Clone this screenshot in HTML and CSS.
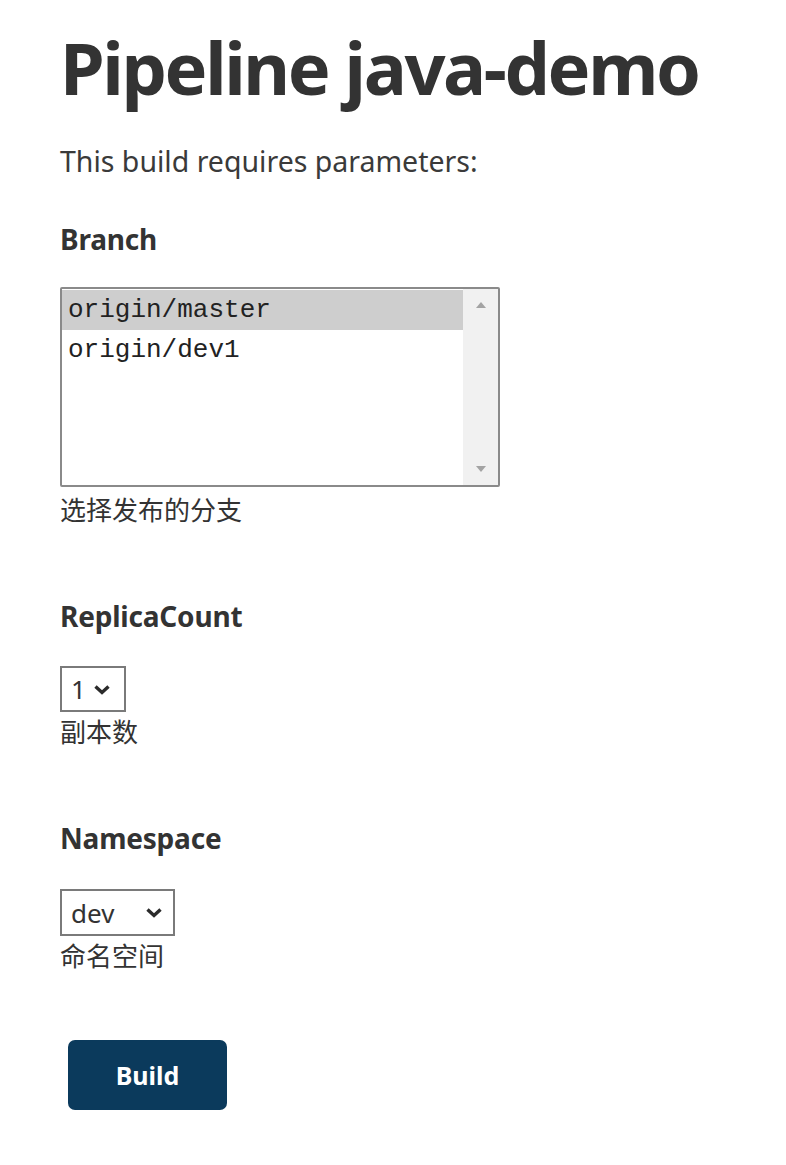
FILE: index.html
```html
<!DOCTYPE html>
<html>
<head>
<meta charset="utf-8">
<link rel="stylesheet" href="styles.css">
</head>
<body>
<div class="page">
  <h1 class="title">Pipeline java-demo</h1>
  <p class="intro">This build requires parameters:</p>

  <div class="param">
    <div class="label">Branch</div>
    <div class="listbox">
      <div class="options">
        <div class="option selected">origin/master</div>
        <div class="option">origin/dev1</div>
      </div>
      <div class="scrollbar">
        <svg class="arrow" width="12" height="8" viewBox="0 0 12 8"><path d="M1 7 L6 1 L11 7 Z" fill="#a3a3a3"/></svg>
        <svg class="arrow" width="12" height="8" viewBox="0 0 12 8"><path d="M1 1 L6 7 L11 1 Z" fill="#a3a3a3"/></svg>
      </div>
    </div>
    <div class="desc">选择发布的分支</div>
  </div>

  <div class="param">
    <div class="label">ReplicaCount</div>
    <div class="select select-small">
      <span class="value">1</span>
      <svg class="chev" width="18" height="11" viewBox="0 0 18 11"><path d="M2.5 2.5 L9 8.5 L15.5 2.5" fill="none" stroke="#2b2b2b" stroke-width="3.4"/></svg>
    </div>
    <div class="desc desc-tight">副本数</div>
  </div>

  <div class="param">
    <div class="label">Namespace</div>
    <div class="select select-wide">
      <span class="value">dev</span>
      <svg class="chev" width="18" height="11" viewBox="0 0 18 11"><path d="M2.5 2.5 L9 8.5 L15.5 2.5" fill="none" stroke="#2b2b2b" stroke-width="3.4"/></svg>
    </div>
    <div class="desc desc-tight">命名空间</div>
  </div>

  <div class="actions">
    <button class="build">Build</button>
  </div>
</div>
</body>
</html>
```

FILE: styles.css
```css
html, body {
  margin: 0;
  padding: 0;
  background: #ffffff;
}
.page {
  padding: 21px 0 0 60px;
  color: #333333;
  font-family: "Noto Sans", "Open Sans", "Noto Sans CJK SC", sans-serif;
}
.title {
  margin: 0;
  font-size: 72px;
  line-height: 92px;
  font-weight: 700;
  color: #333333;
  letter-spacing: -2.4px;
}
.intro {
  margin: 30px 0 0 0;
  font-size: 28.5px;
  line-height: 36px;
  color: #3a3a3a;
}
.param {
  display: flex;
  flex-direction: column;
  align-items: flex-start;
}
.param + .param {
  margin-top: 71px;
}
.intro + .param {
  margin-top: 42px;
}
.label {
  font-size: 28px;
  font-weight: 700;
  line-height: 36px;
  margin-bottom: 30px;
  letter-spacing: -0.2px;
}
.listbox {
  width: 436px;
  height: 196px;
  border: 2px solid #8a8a8a;
  border-radius: 2px;
  display: flex;
  background: #fff;
}
.options {
  flex: 1;
  padding-top: 1px;
}
.option {
  font-family: "Liberation Mono", "DejaVu Sans Mono", monospace;
  font-size: 26px;
  line-height: 40px;
  height: 40px;
  padding-left: 6px;
  color: #222;
}
.option.selected {
  background: #cecece;
}
.scrollbar {
  width: 35px;
  background: #f1f1f1;
  display: flex;
  flex-direction: column;
  justify-content: space-between;
  align-items: center;
  padding: 12px 0 12px 0;
}
.desc {
  margin-top: 4px;
  font-family: "Noto Sans CJK SC", sans-serif;
  font-size: 26px;
  line-height: 36px;
  color: #333;
}
.desc-tight {
  margin-top: 1px;
}
.select {
  height: 42px;
  margin-top: 2px;
  border: 2px solid #7a7a7a;
  display: flex;
  align-items: center;
  box-sizing: content-box;
  background: #fff;
}
.select .value {
  font-size: 26px;
  color: #333;
  padding-left: 9px;
}
.select-small {
  width: 62px;
}
.select-small .chev {
  margin-left: 7px;
}
.select-wide {
  width: 111px;
  height: 43px;
  margin-top: 3px;
}
.select-wide .chev {
  margin-left: auto;
  margin-right: 10px;
}
.actions {
  margin-top: 67px;
  padding-left: 8px;
}
.build {
  width: 159px;
  height: 70px;
  background: #0b3a5c;
  color: #ffffff;
  border: none;
  border-radius: 7px;
  font-family: "Noto Sans", "Open Sans", sans-serif;
  font-weight: 700;
  font-size: 25px;
  padding: 0;
}
```
